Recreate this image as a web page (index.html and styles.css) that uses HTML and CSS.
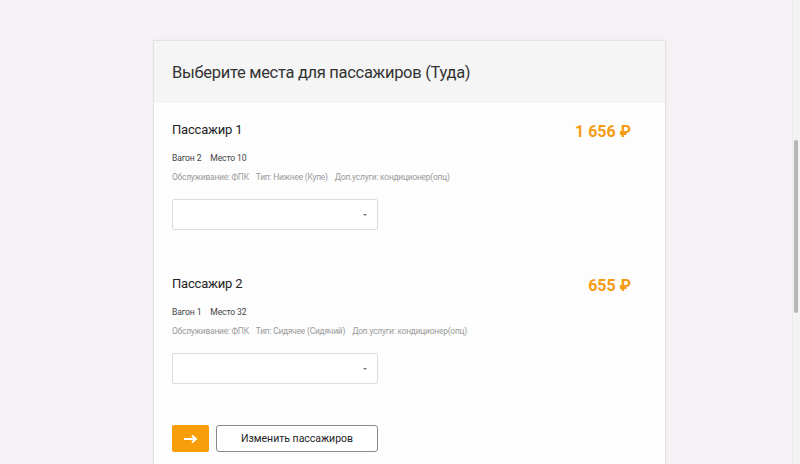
FILE: index.html
```html
<!DOCTYPE html>
<html lang="ru">
<head>
<meta charset="utf-8">
<title>Выбор мест</title>
<link rel="stylesheet" href="styles.css">
</head>
<body>
<div class="page">
  <div class="card">
    <div class="card-head">Выберите места для пассажиров (Туда)</div>
    <div class="card-body">
      <div class="passenger">
        <div class="p-head">
          <div class="p-title">Пассажир 1</div>
          <div class="p-price">1 656 ₽</div>
        </div>
        <div class="p-car"><span>Вагон 2</span><span>Место 10</span></div>
        <div class="p-info"><span>Обслуживание: ФПК</span><span>Тип: Нижнее (Купе)</span><span>Доп.услуги: кондиционер(опц)</span></div>
        <div class="select"><span class="caret"></span></div>
      </div>
      <div class="passenger">
        <div class="p-head">
          <div class="p-title">Пассажир 2</div>
          <div class="p-price">655 ₽</div>
        </div>
        <div class="p-car"><span>Вагон 1</span><span>Место 32</span></div>
        <div class="p-info"><span>Обслуживание: ФПК</span><span>Тип: Сидячее (Сидячий)</span><span>Доп.услуги: кондиционер(опц)</span></div>
        <div class="select"><span class="caret"></span></div>
      </div>
      <div class="actions">
        <button class="btn-go" type="button" aria-label="Далее">
          <svg width="16" height="10" viewBox="0 0 16 10"><path d="M1 5h12M9 1.5L13 5 9 8.5" fill="none" stroke="#fff" stroke-width="2"/></svg>
        </button>
        <button class="btn-change" type="button">Изменить пассажиров</button>
      </div>
    </div>
  </div>
</div>
<div class="scrollbar"><div class="thumb"></div></div>
</body>
</html>
```
FILE: styles.css
```css
html, body {
  margin: 0;
  padding: 0;
  height: 100%;
  overflow: hidden;
}
body {
  background: #f5f1f5;
  font-family: Roboto, "Noto Sans", sans-serif;
  color: #222;
}
.page {
  padding: 40px 0 0 153px;
}
.card {
  width: 511px;
  border: 1px solid #e2e2e2;
  border-bottom: none;
  box-shadow: 0 0 2px rgba(0,0,0,0.06);
  background: #fdfdfd;
}
.card-head {
  height: 62px;
  background: #f5f5f5;
  display: flex;
  align-items: center;
  padding: 0 18px;
  font-size: 16.5px;
  letter-spacing: -0.3px;
  color: #333;
}
.card-body {
  padding: 17px 34px 40px 18px;
}
.passenger + .passenger {
  margin-top: 44px;
}
.p-head {
  display: flex;
  justify-content: space-between;
  align-items: center;
  height: 18px;
}
.p-title {
  font-size: 13px;
  letter-spacing: -0.2px;
  color: #222;
}
.p-price {
  font-size: 16px;
  font-weight: 700;
  color: #f59c14;
  margin-top: 4px;
}
.p-car {
  margin-top: 13px;
  line-height: 14px;
  font-size: 8.6px;
  letter-spacing: -0.15px;
  color: #444;
  display: flex;
  gap: 9px;
}
.p-info {
  margin-top: 5px;
  line-height: 14px;
  font-size: 8.4px;
  letter-spacing: -0.2px;
  color: #9a9a9a;
  display: flex;
  gap: 7px;
}
.select {
  margin-top: 15px;
  width: 204px;
  height: 29px;
  border: 1px solid #dcdcdc;
  border-radius: 2px;
  background: #fff;
  position: relative;
}
.caret {
  position: absolute;
  right: 10px;
  top: 14px;
  width: 0;
  height: 0;
  border-left: 2.5px solid transparent;
  border-right: 2.5px solid transparent;
  border-top: 2.5px solid #777;
}
.actions {
  margin-top: 41px;
  display: flex;
  gap: 7px;
}
.btn-go {
  width: 37px;
  height: 27px;
  border: none;
  border-radius: 2px;
  background: #f79e0a;
  display: flex;
  align-items: center;
  justify-content: center;
  padding: 0;
}
.btn-change {
  width: 162px;
  height: 27px;
  border: 1px solid #8a8a8a;
  border-radius: 3px;
  background: #fff;
  font-family: Roboto, "Noto Sans", sans-serif;
  font-size: 10.5px;
  color: #222;
  padding: 0;
}
.scrollbar {
  position: fixed;
  right: 0;
  top: 0;
  width: 7px;
  height: 100%;
  background: #f3f3f3;
  border-left: 1px solid #ececec;
}
.thumb {
  position: absolute;
  left: 1px;
  top: 140px;
  width: 4px;
  height: 173px;
  background: #b5b5b5;
  border-radius: 2px;
}
```
